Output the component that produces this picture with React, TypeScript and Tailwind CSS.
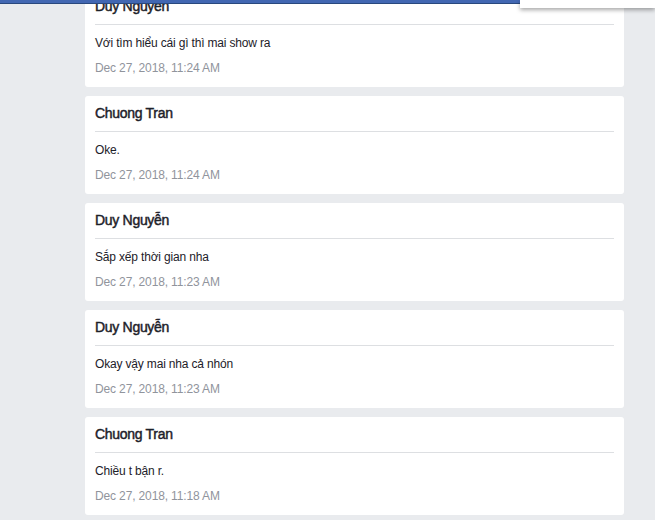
import React from "react";

const msgs = [
  { name: "Duy Nguyễn", text: "Với tìm hiểu cái gì thì mai show ra", date: "Dec 27, 2018, 11:24 AM" },
  { name: "Chuong Tran", text: "Oke.", date: "Dec 27, 2018, 11:24 AM" },
  { name: "Duy Nguyễn", text: "Sắp xếp thời gian nha", date: "Dec 27, 2018, 11:23 AM" },
  { name: "Duy Nguyễn", text: "Okay vậy mai nha cả nhón", date: "Dec 27, 2018, 11:23 AM" },
  { name: "Chuong Tran", text: "Chiều t bận r.", date: "Dec 27, 2018, 11:18 AM" },
];

export default function App() {
  return (
    <div
      className="relative w-[655px] h-[520px] overflow-hidden bg-[#e9ebee]"
      style={{ fontFamily: '"Liberation Sans", Arial, sans-serif' }}
    >
      <div className="flex flex-col gap-[9px] ml-[85px] mt-[-11px] w-[539px]">
        {msgs.map((m, i) => (
          <div key={i} className="bg-white rounded-[3px] px-[10px] pt-[8px] pb-[11px]">
            <div className="text-[14px] leading-[18px] font-normal tracking-[-0.3px] text-[#1d2129] [-webkit-text-stroke:0.45px_#1d2129]">
              {m.name}
            </div>
            <div className="mt-[9px] h-px bg-[#dddfe2]" />
            <div className="mt-[10px] text-[12px] leading-[16px] tracking-[-0.17px] text-[#1d2129]">{m.text}</div>
            <div className="mt-[9px] text-[12px] leading-[16px] tracking-[-0.14px] text-[#90949c]">{m.date}</div>
          </div>
        ))}
      </div>
      <div className="absolute left-0 top-0 w-[655px] h-[4px] bg-[#4267b2] border-b border-[#29487d]" />
      <div className="absolute left-[520px] top-0 w-[135px] h-[8px] bg-white shadow-[0_2px_4px_rgba(0,0,0,0.35)]" />
    </div>
  );
}
